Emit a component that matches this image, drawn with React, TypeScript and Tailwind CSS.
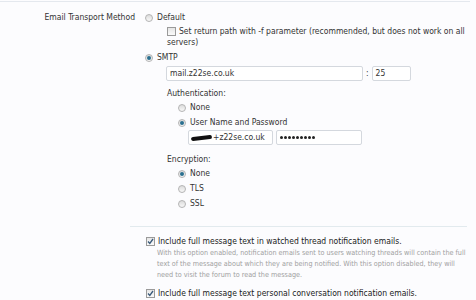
import React from "react";

const font = { fontFamily: '"DejaVu Sans Condensed", "DejaVu Sans", Tahoma, sans-serif' };

function Radio({ checked }: { checked?: boolean }) {
  return (
    <span className="inline-flex h-[8px] w-[8px] shrink-0 items-center justify-center rounded-full border border-[#b4b4b4] bg-gradient-to-b from-[#dcdcdc] to-[#f8f8f8]">
      {checked && <span className="h-[4px] w-[4px] rounded-full bg-[#2a6f8f]" />}
    </span>
  );
}

function Check({ checked }: { checked?: boolean }) {
  return (
    <span className="relative inline-flex h-[9px] w-[9px] shrink-0 items-center justify-center border border-[#9a9a9a] bg-gradient-to-b from-[#e6e6e6] to-[#fafafa]">
      {checked && (
        <svg width="7" height="7" viewBox="0 0 7 7" className="absolute">
          <path d="M1 3.5 L2.8 5.5 L6 1" stroke="#3a5a7a" strokeWidth="1.3" fill="none" />
        </svg>
      )}
    </span>
  );
}

function RadioRow({ checked, label }: { checked?: boolean; label: string }) {
  return (
    <div className="flex h-[15px] items-center gap-[4px]">
      <Radio checked={checked} />
      <span>{label}</span>
    </div>
  );
}

export default function App() {
  return (
    <div
      className="h-[300px] w-[476px] overflow-hidden bg-[#fcfcfe] text-[8.5px] leading-[11px] text-[#333333]"
      style={font}
    >
      <div className="mt-[1px] h-px w-[470px] bg-[#e4e8ee]" />
      <div className="flex pt-[8px]">
        <div className="w-[145px] shrink-0 pr-[10px] text-right leading-[15px]">Email Transport Method</div>
        <div className="flex-1">
          <RadioRow label="Default" />
          <div className="pl-[22px] pt-[1px]">
            <div className="flex items-center gap-[3px] whitespace-nowrap">
              <Check />
              <span>Set return path with -f parameter (recommended, but does not work on all</span>
            </div>
            <div>servers)</div>
          </div>
          <div className="mt-[2px]">
            <RadioRow checked label="SMTP" />
          </div>
          <div className="flex items-center pl-[21px] pt-[1px]">
            <div className="flex h-[15px] w-[197px] items-center rounded-[2px] border border-[#d4d8de] bg-white px-[3px]">
              mail.z22se.co.uk
            </div>
            <span className="px-[3px]">:</span>
            <div className="flex h-[15px] w-[39px] items-center rounded-[2px] border border-[#d4d8de] bg-white px-[3px]">
              25
            </div>
          </div>
          <div className="pl-[22px] pt-[5px]">
            <div className="h-[14px] leading-[14px]">Authentication:</div>
            <div className="pl-[11px]">
              <RadioRow label="None" />
              <RadioRow checked label="User Name and Password" />
              <div className="flex gap-[3px] pl-[10px]">
                <div className="flex h-[15px] w-[85px] items-center rounded-[2px] border border-[#d4d8de] bg-white px-[2px]">
                  <span className="mr-[1px] inline-block h-[4px] w-[21px] -rotate-6 rounded-full bg-[#111]" />
                  +z22se.co.uk
                </div>
                <div className="flex h-[15px] w-[86px] items-center gap-[1px] rounded-[2px] border border-[#d4d8de] bg-white px-[3px]">
                  {Array.from({ length: 9 }).map((_, i) => (
                    <span key={i} className="h-[3px] w-[3px] rounded-full bg-[#222]" />
                  ))}
                </div>
              </div>
            </div>
            <div className="h-[14px] pt-[7px] leading-[14px]">Encryption:</div>
            <div className="pl-[11px] pt-[7px]">
              <RadioRow checked label="None" />
              <RadioRow label="TLS" />
              <RadioRow label="SSL" />
            </div>
          </div>
        </div>
      </div>
      <div className="ml-[130px] mt-[15px] h-px w-[337px] bg-[#e2eaee]" />
      <div className="pl-[146px] pt-[9px]">
        <div className="flex items-center gap-[3px]">
          <Check checked />
          <span className="text-[#222]">Include full message text in watched thread notification emails.</span>
        </div>
        <div className="pl-[11px] pr-[8px] text-[7.2px] leading-[11px] text-[#a0a0a0]">
          With this option enabled, notification emails sent to users watching threads will contain the full text of the message about which they are being notified. With this option disabled, they will need to visit the forum to read the message.
        </div>
        <div className="mt-[8px] flex items-center gap-[3px]">
          <Check checked />
          <span className="text-[#222]">Include full message text personal conversation notification emails.</span>
        </div>
      </div>
    </div>
  );
}
